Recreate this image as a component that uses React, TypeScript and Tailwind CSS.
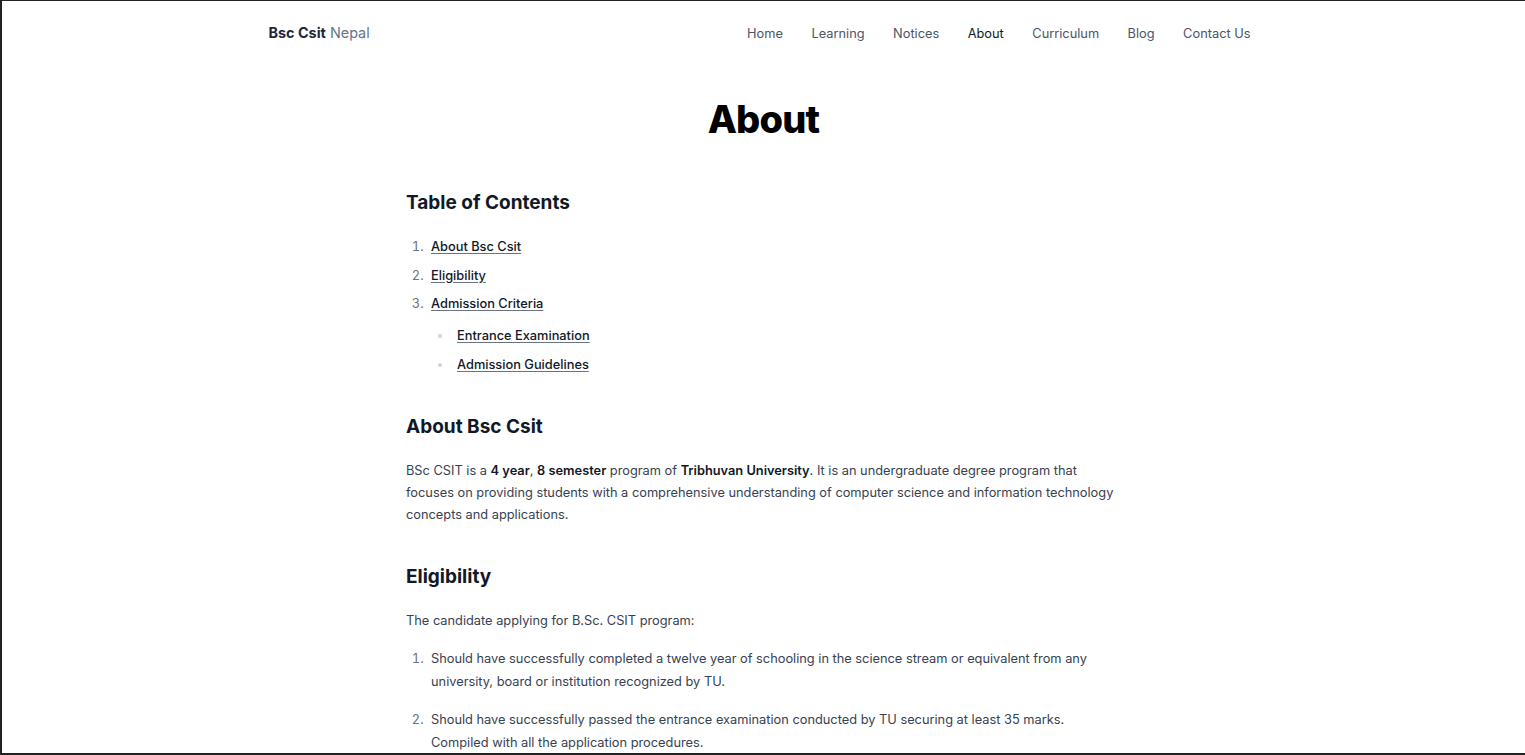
import React from 'react';

const navLinks = ['Home', 'Learning', 'Notices', 'About', 'Curriculum', 'Blog', 'Contact Us'];

const tocItems = ['About Bsc Csit', 'Eligibility', 'Admission Criteria'];
const tocSub = ['Entrance Examination', 'Admission Guidelines'];

const App: React.FC = () => {
  return (
    <div
      className="h-screen overflow-hidden bg-white border-t border-l-2 border-b-2 border-[#222222]"
      style={{ fontFamily: 'Inter, "Noto Sans", sans-serif' }}
    >
      {/* Header */}
      <header className="w-[990px] pr-[8px] mx-auto h-[64px] flex items-center justify-between">
        <a className="text-[14.4px]">
          <span className="font-bold text-[#1e293b]">Bsc Csit</span>{' '}
          <span className="text-[#64748b]">Nepal</span>
        </a>
        <nav className="flex items-center gap-[28.5px] text-[12.8px] pt-[2px]">
          {navLinks.map((link) => (
            <a key={link} className={link === 'About' ? 'text-[#111827]' : 'text-[#4b5563]'}>
              {link}
            </a>
          ))}
        </nav>
      </header>

      {/* Body */}
      <main className="w-[715px] mx-auto text-[12.8px] leading-[22px] text-[#374151]">
        <h1 className="mt-[30px] text-center text-[38px] leading-[48px] font-extrabold text-black tracking-[-0.8px]">
          About
        </h1>

        <h2 className="mt-[46px] text-[19px] leading-[28px] font-bold text-[#111827]">
          Table of Contents
        </h2>
        <ol className="mt-[19px] list-decimal pl-[21px] marker:text-[#6b7280]">
          {tocItems.map((item, i) => (
            <li key={item} className={i === 0 ? 'pl-[4px]' : 'pl-[4px] mt-[6.5px]'}>
              <a className="font-medium text-[#111827] underline decoration-[#6b7280] underline-offset-[2px]">{item}</a>
              {i === 2 && (
                <ul className="list-disc pl-[22px] marker:text-[#d1d5db]">
                  {tocSub.map((sub, j) => (
                    <li key={sub} className={j === 0 ? 'pl-[4px] mt-[10px]' : 'pl-[4px] mt-[7px]'}>
                      <a className="font-medium text-[#111827] underline decoration-[#6b7280] underline-offset-[2px]">
                        {sub}
                      </a>
                    </li>
                  ))}
                </ul>
              )}
            </li>
          ))}
        </ol>

        <h2 className="mt-[37px] text-[19px] leading-[28px] font-bold text-[#111827]">About Bsc Csit</h2>
        <p className="mt-[19px]">
          BSc CSIT is a <strong className="font-semibold text-[#111827]">4 year</strong>,{' '}
          <strong className="font-semibold text-[#111827]">8 semester</strong> program of{' '}
          <strong className="font-semibold text-[#111827]">Tribhuvan University</strong>. It is an undergraduate degree
          program that focuses on providing students with a comprehensive understanding of computer science and
          information technology concepts and applications.
        </p>

        <h2 className="mt-[37px] text-[19px] leading-[28px] font-bold text-[#111827]">Eligibility</h2>
        <p className="mt-[19px]">The candidate applying for B.Sc. CSIT program:</p>
        <ol className="mt-[15px] list-decimal pl-[21px] marker:text-[#6b7280] leading-[23px]">
          <li className="pl-[4px]">
            Should have successfully completed a twelve year of schooling in the science stream or equivalent from any
            university, board or institution recognized by TU.
          </li>
          <li className="pl-[4px] mt-[15px]">
            Should have successfully passed the entrance examination conducted by TU securing at least 35 marks.
            Compiled with all the application procedures.
          </li>
        </ol>
      </main>
    </div>
  );
};

export default App;
